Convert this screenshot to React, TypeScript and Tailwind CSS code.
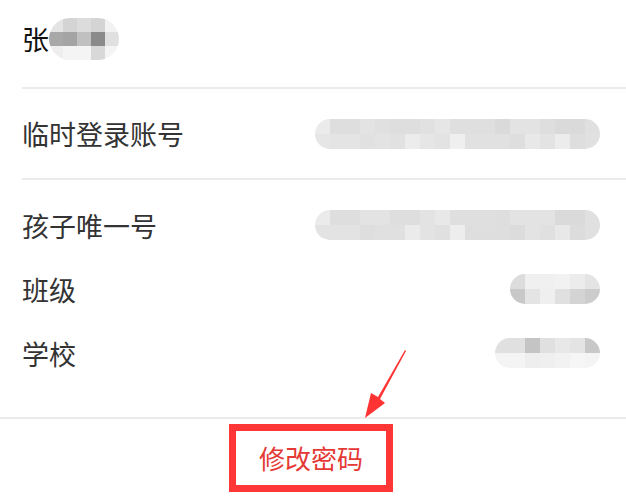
const font = { fontFamily: '"Noto Sans CJK SC", "Noto Sans", sans-serif' };

function Mosaic({ rows, cell, className }: { rows: string[][]; cell: number; className?: string }) {
    return (
        <div className={`flex flex-col overflow-hidden rounded-full blur-[0.6px] ${className ?? ""}`}>
            {rows.map((row, i) => (
                <div key={i} className="flex">
                    {row.map((c, j) => (
                        <div key={j} style={{ width: cell, height: cell, background: c }} />
                    ))}
                </div>
            ))}
        </div>
    );
}

const longRows = [
    ["#ebebeb", "#dedede", "#dedede", "#e3e3e3", "#e0e0e0", "#dedede", "#dedede", "#e1e1e1", "#e6e6e6", "#dfdfdf", "#dfdfdf", "#dfdfdf", "#dadada", "#e3e3e3", "#e3e3e3", "#dedede", "#dadada", "#dadada", "#e0e0e0"],
    ["#e6e6e6", "#e4e4e4", "#e4e4e4", "#e1e1e1", "#e3e3e3", "#e1e1e1", "#ececec", "#e6e6e6", "#e3e3e3", "#efefef", "#e1e1e1", "#e1e1e1", "#e1e1e1", "#dedede", "#e8e8e8", "#e3e3e3", "#ececec", "#dedede", "#e1e1e1"],
];

const longRows2 = [
    ["#ebebeb", "#dedede", "#dedede", "#e3e3e3", "#e3e3e3", "#dedede", "#dedede", "#e3e3e3", "#e8e8e8", "#dfdfdf", "#dfdfdf", "#dfdfdf", "#dedede", "#e3e3e3", "#e3e3e3", "#e3e3e3", "#dadada", "#dadada", "#e0e0e0"],
    ["#e3e3e3", "#e3e3e3", "#e3e3e3", "#dedede", "#e0e0e0", "#e0e0e0", "#ebebeb", "#e3e3e3", "#e0e0e0", "#ededed", "#dedede", "#dedede", "#dedede", "#dcdcdc", "#e3e3e3", "#e0e0e0", "#e8e8e8", "#dcdcdc", "#e0e0e0"],
];

function Row({ label, value }: { label: string; value: React.ReactNode }) {
    return (
        <div className="flex h-[64px] items-center justify-between pl-[22px] pr-[26px]">
            <span className="text-[27px] leading-none text-[#333]">{label}</span>
            {value}
        </div>
    );
}

export default function App() {
    return (
        <div className="relative w-[626px] h-[497px] overflow-hidden bg-white" style={font}>
            {/* name */}
            <div className="flex h-[87px] items-center pb-[10px] pl-[22px]">
                <span className="text-[27px] leading-none text-[#111]">张</span>
                <Mosaic
                    cell={14}
                    rows={[
                        ["#e4e4e4", "#d4d4d4", "#dcdcdc", "#d4d4d4", "#f2f2f2"],
                        ["#a8a8a8", "#a4a4a4", "#c0c0c0", "#8a8a8a", "#e0e0e0"],
                        ["#eeeeee", "#f4f4f4", "#f4f4f4", "#d8d8d8", "#f4f4f4"],
                    ]}
                />
            </div>
            <div className="ml-[22px] h-[2px] bg-[#ebebeb]" />

            <div className="flex h-[89px] items-center justify-between pl-[22px] pr-[26px]">
                <span className="text-[27px] leading-none text-[#333]">临时登录账号</span>
                <Mosaic cell={15} rows={longRows} />
            </div>
            <div className="ml-[22px] h-[2px] bg-[#ebebeb]" />

            <div className="pt-[13px] pb-[32px]">
                <Row label="孩子唯一号" value={<Mosaic cell={15} rows={longRows2} />} />
                <Row
                    label="班级"
                    value={
                        <Mosaic
                            cell={15}
                            rows={[
                                ["#dcdcdc", "#f0f0f0", "#f0f0f0", "#f2f2f2", "#ececec", "#e4e4e4"],
                                ["#c8c8c8", "#e4e4e4", "#efefef", "#e0e0e0", "#d4d4d4", "#cccccc"],
                            ]}
                        />
                    }
                />
                <Row
                    label="学校"
                    value={
                        <Mosaic
                            cell={15}
                            rows={[
                                ["#e0e0e0", "#e0e0e0", "#c4c4c4", "#e0e0e0", "#e8e8e8", "#e4e4e4", "#c8c8c8"],
                                ["#f4f4f4", "#f4f4f4", "#eeeeee", "#efefef", "#f2f2f2", "#f6f6f6", "#f4f4f4"],
                            ]}
                        />
                    }
                />
            </div>
            <div className="h-[2px] bg-[#ebebeb]" />

            <div className="flex justify-center pt-[5px] pr-[4px]">
                <div className="flex h-[68px] w-[164px] items-center justify-center border-[7px] border-[#ff3636]">
                    <span className="text-[26px] leading-none text-[#e53935]">修改密码</span>
                </div>
            </div>

            {/* annotation arrow */}
            <svg className="absolute left-[355px] top-[345px]" width="60" height="80" viewBox="0 0 60 80">
                <path d="M50 5 L23 52 L16 48 L10 73 L30 58 L25 54 L51 6 Z" fill="#ff3333" />
            </svg>
        </div>
    );
}
